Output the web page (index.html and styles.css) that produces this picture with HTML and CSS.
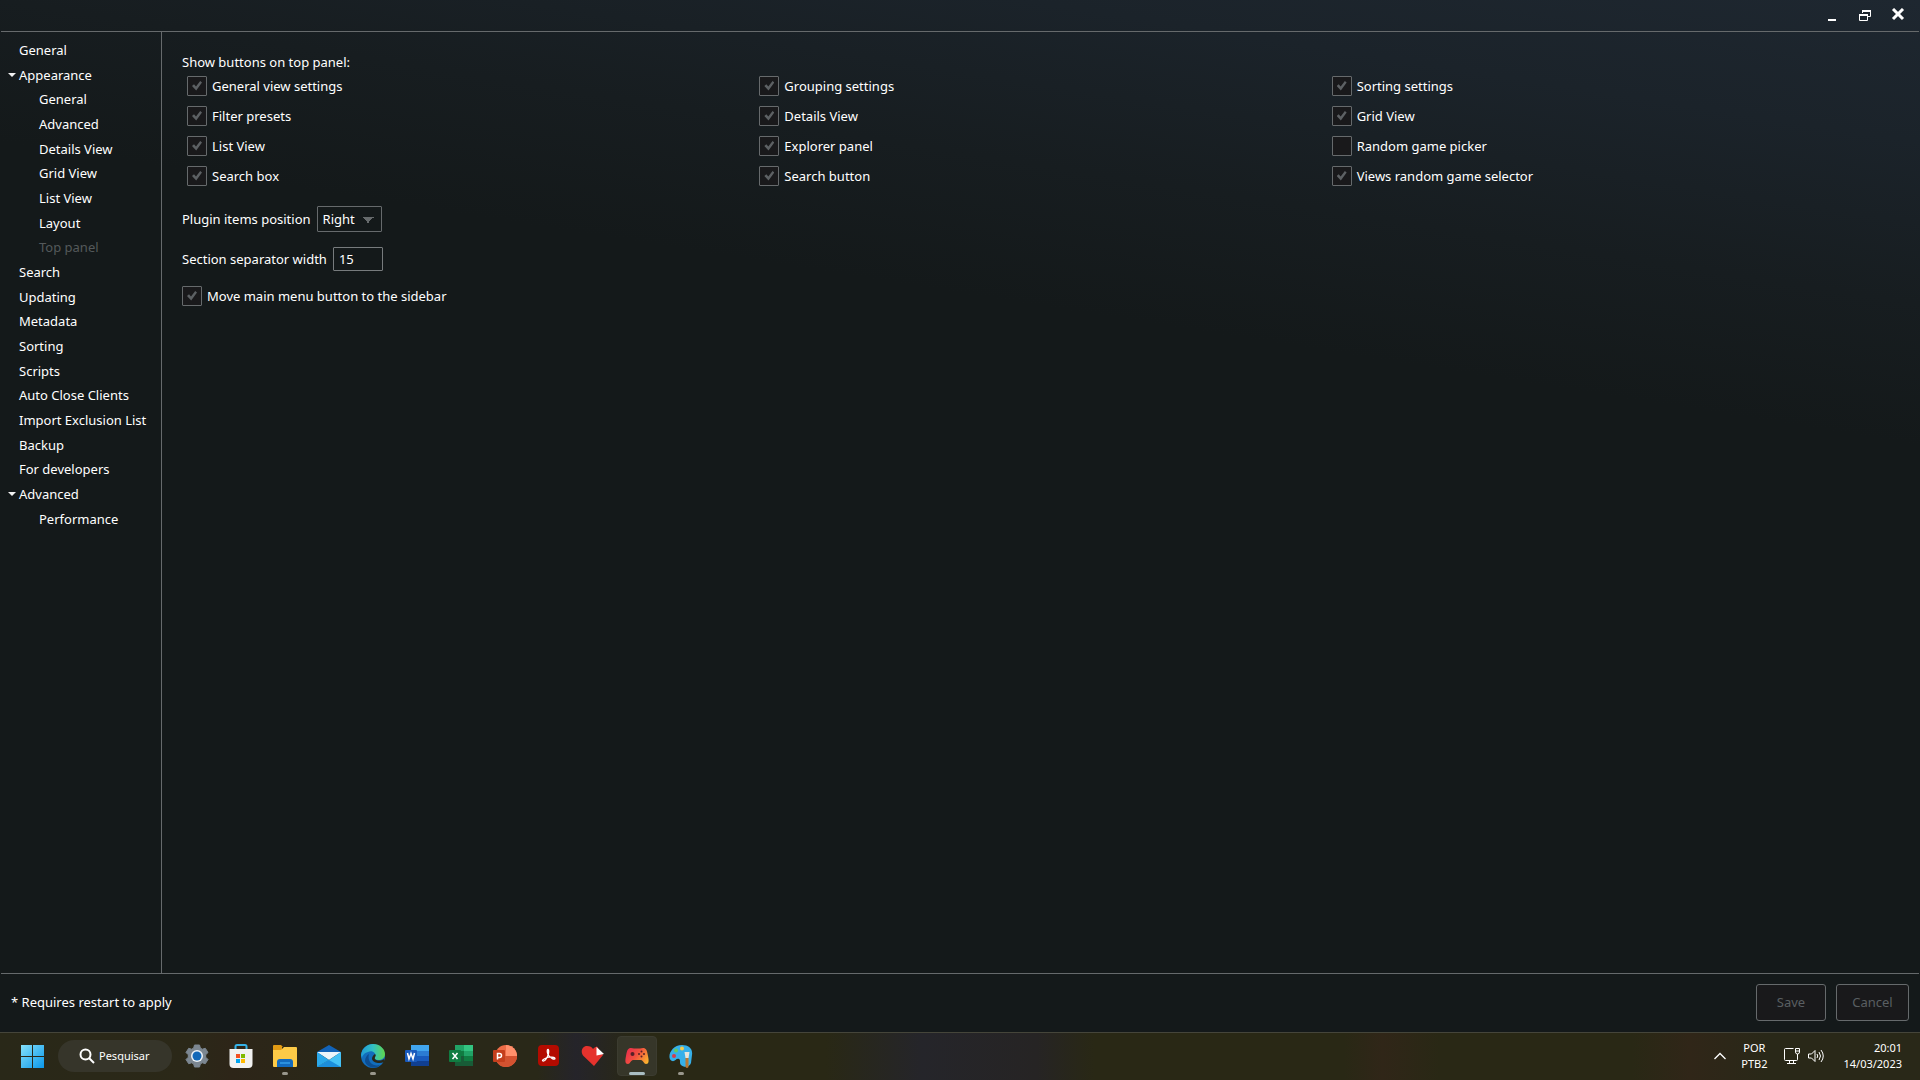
FILE: index.html
```html
<!DOCTYPE html>
<html lang="en">
<head>
<meta charset="utf-8">
<title>Settings</title>
<link rel="stylesheet" href="styles.css">
</head>
<body>
<div class="window">
  <header class="titlebar">
    <button class="win-btn" aria-label="Minimize"><svg width="14" height="14" viewBox="0 0 14 14"><path d="M3 12h8" stroke="#fff" stroke-width="2"/></svg></button>
    <button class="win-btn" aria-label="Restore"><svg width="14" height="14" viewBox="0 0 14 14" fill="none" stroke="#fff"><path d="M4.500 5V2.500h8v6H10" /><path d="M4 3h9M1 7h9" stroke-width="2"/><path d="M1.500 7v5.500h8V7"/></svg></button>
    <button class="win-btn" aria-label="Close"><svg width="14" height="14" viewBox="0 0 14 14"><path d="M2 1l10 10M12 1L2 11" stroke="#fff" stroke-width="3"/></svg></button>
  </header>
  <div class="body">
    <nav class="sidebar" aria-label="Settings sections">
      <ul class="tree">
        <li><a href="#">General</a></li>
        <li class="group"><a href="#">Appearance</a></li>
        <li class="child"><a href="#">General</a></li>
        <li class="child"><a href="#">Advanced</a></li>
        <li class="child"><a href="#">Details View</a></li>
        <li class="child"><a href="#">Grid View</a></li>
        <li class="child"><a href="#">List View</a></li>
        <li class="child"><a href="#">Layout</a></li>
        <li class="child current"><a href="#" aria-current="page">Top panel</a></li>
        <li><a href="#">Search</a></li>
        <li><a href="#">Updating</a></li>
        <li><a href="#">Metadata</a></li>
        <li><a href="#">Sorting</a></li>
        <li><a href="#">Scripts</a></li>
        <li><a href="#">Auto Close Clients</a></li>
        <li><a href="#">Import Exclusion List</a></li>
        <li><a href="#">Backup</a></li>
        <li><a href="#">For developers</a></li>
        <li class="group"><a href="#">Advanced</a></li>
        <li class="child"><a href="#">Performance</a></li>
      </ul>
    </nav>
    <main class="content">
      <p class="heading">Show buttons on top panel:</p>
      <div class="options">
        <label class="check"><input type="checkbox" checked>General view settings</label>
        <label class="check"><input type="checkbox" checked>Grouping settings</label>
        <label class="check"><input type="checkbox" checked>Sorting settings</label>
        <label class="check"><input type="checkbox" checked>Filter presets</label>
        <label class="check"><input type="checkbox" checked>Details View</label>
        <label class="check"><input type="checkbox" checked>Grid View</label>
        <label class="check"><input type="checkbox" checked>List View</label>
        <label class="check"><input type="checkbox" checked>Explorer panel</label>
        <label class="check"><input type="checkbox">Random game picker</label>
        <label class="check"><input type="checkbox" checked>Search box</label>
        <label class="check"><input type="checkbox" checked>Search button</label>
        <label class="check"><input type="checkbox" checked>Views random game selector</label>
      </div>
      <div class="field">
        <label for="position">Plugin items position</label>
        <select id="position"><option>Right</option><option>Left</option></select>
      </div>
      <div class="field">
        <label for="separator">Section separator width</label>
        <input class="number" id="separator" type="text" value="15">
      </div>
      <label class="check"><input type="checkbox" checked>Move main menu button to the sidebar</label>
    </main>
  </div>
  <footer class="footer">
    <span class="note">* Requires restart to apply</span>
    <button class="btn save">Save</button>
    <button class="btn">Cancel</button>
  </footer>
</div>
<div class="taskbar">
  <div class="apps">
    <button class="app" aria-label="Start"><svg width="24" height="24" viewBox="0 0 24 24"><defs><linearGradient id="win" x1="0" y1="0" x2="24" y2="24" gradientUnits="userSpaceOnUse"><stop stop-color="#8ae4fb"/><stop offset="1" stop-color="#0a97ea"/></linearGradient></defs><path fill="url(#win)" d="M1 1h11v11H1zM13 1h11v11H13zM1 13h11v11H1zM13 13h11v11H13z"/></svg></button>
    <button class="search"><svg width="16" height="16" viewBox="0 0 16 16" fill="none" stroke="#fff" stroke-width="2"><circle cx="6.500" cy="6.500" r="5"/><path d="M10 10l5 5"/></svg>Pesquisar</button>
    <button class="app" aria-label="Configurações"><svg width="24" height="24" viewBox="0 0 24 24"><path fill="#7c8791" stroke="#7c8791" stroke-width="1" stroke-linejoin="round" d="M9.500 1h5l.8 3 2 1.200 3-.9L23 8.500l-2.300 2.300v2.400L23 15.500l-2.700 4.200-3-.9-2 1.200-.8 3h-5l-.8-3-2-1.200-3 .9L1 15.500l2.300-2.300v-2.400L1 8.500l2.700-4.200 3 .9 2-1.200z"/><circle cx="12" cy="12" r="6" fill="#eef3f7"/><circle cx="12" cy="12" r="4.500" fill="#1268b8"/></svg></button>
    <button class="app" aria-label="Microsoft Store"><svg width="24" height="24" viewBox="0 0 24 24"><path d="M6.500 6V2.500Q6.500 1 8 1h8q1.500 0 1.500 1.500V6" fill="none" stroke="#35b2e8" stroke-width="2"/><path fill="#f1f1f0" d="M.5 5h23v15q0 4-4 4h-15q-4 0-4-4z"/><path fill="#f25022" d="M7 10h4v4H7z"/><path fill="#7fba00" d="M12 10h4v4h-4z"/><path fill="#00a4ef" d="M7 15h4v4H7z"/><path fill="#ffb900" d="M12 15h4v4h-4z"/></svg></button>
    <button class="app open" aria-label="Explorador de Arquivos"><svg width="24" height="24" viewBox="0 0 24 24"><path fill="#e29b14" d="M0 2q0-1 1-1h7l2 2h-1v4H0z"/><path fill="#fcca47" d="M0 6h8l3-3h12q1 0 1 1v18q0 1-1 1H1q-1 0-1-1z"/><path fill="#126bc0" d="M4 23v-5q0-3 3-3h10q3 0 3 3v5z"/><path fill="#2b91df" d="M7 18h10v2H7z"/></svg></button>
    <button class="app" aria-label="E-mail"><svg width="24" height="24" viewBox="0 0 24 24"><path fill="#1263b7" d="M0 8l12-7 12 7v3H0z"/><path fill="#ecf5fb" d="M0 8h24L12 16z"/><path fill="#2aa8ea" d="M0 8l12 8L0 23z"/><path fill="#45c2f5" d="M24 8v15H0l12-7z"/><path fill="#1c8edb" d="M0 23l12-7 12 7z"/></svg></button>
    <button class="app open" aria-label="Microsoft Edge"><svg width="24" height="24" viewBox="0 0 24 24"><defs><linearGradient id="edge" x1="0" y1="8" x2="24" y2="8" gradientUnits="userSpaceOnUse"><stop stop-color="#209bd8"/><stop offset=".5" stop-color="#32bfc3"/><stop offset="1" stop-color="#60d74b"/></linearGradient></defs><circle cx="12" cy="12" r="12" fill="#126dbd"/><path fill="url(#edge)" d="M0 11C1 4 6 0 12 0c7 0 12 5 12 10 0 4-3 6-7 6-3 0-4-1-3-3 2-4-3-7-7-5-4 1-6 4-6 6z"/><path fill="#0d4d91" d="M8 10c-2 7 3 13 11 11-5 5-14 2-15-4 0-3 2-6 4-7z"/><path fill="#29281a" d="M14 10c2 2-1 3 0 5 2 2 6 2 9 0v3c-4 2-11 1-12-3 0-2 1-4 3-5z"/></svg></button>
    <button class="app" aria-label="Word"><svg width="24" height="24" viewBox="0 0 24 24"><path fill="#41a5ee" d="M6 1h18v6H6z"/><path fill="#2b7cd3" d="M6 7h18v5H6z"/><path fill="#185abd" d="M6 12h18v5H6z"/><path fill="#103f91" d="M6 17h18v5H6z"/><rect y="6" width="12" height="12" rx="1" fill="#185abd"/><path d="M2.500 9l1.500 6 2-5.500L8 15l1.500-6" fill="none" stroke="#fff" stroke-width="1.500"/></svg></button>
    <button class="app" aria-label="Excel"><svg width="24" height="24" viewBox="0 0 24 24"><path fill="#21a366" d="M6 1h9v6H6z"/><path fill="#33c481" d="M15 1h9v6h-9z"/><path fill="#107c41" d="M6 7h9v5H6z"/><path fill="#21a366" d="M15 7h9v5h-9z"/><path fill="#185c37" d="M6 12h9v10H6z"/><path fill="#107c41" d="M15 12h9v5h-9z"/><path fill="#185c37" d="M15 17h9v5h-9z"/><rect y="6" width="12" height="12" rx="1" fill="#107c41"/><path d="M3.500 9l5 6M8.500 9l-5 6" stroke="#fff" stroke-width="1.500"/></svg></button>
    <button class="app" aria-label="PowerPoint"><svg width="24" height="24" viewBox="0 0 24 24"><circle cx="13" cy="12" r="11" fill="#ed6c47"/><path fill="#ff8f6b" d="M13 1a11 11 0 0 1 11 11H13z"/><path fill="#d35230" d="M2 12h22a11 11 0 0 1-22 0z"/><rect y="6" width="12" height="12" rx="1" fill="#c43e1c"/><path d="M4.500 15.500V9.500h2q2 0 2 2t-2 2h-2" fill="none" stroke="#fff" stroke-width="1.500"/></svg></button>
    <button class="app" aria-label="Acrobat"><svg width="24" height="24" viewBox="0 0 24 24"><rect x="1" y="1" width="21" height="21" rx="4" fill="#b30b00"/><path d="M6 17c-2-1 3-3 6-4 3 0 6 0 6 1.500s-5 0-7-4c-1-3-1-5 0-5s1 4-.5 7-3 5-4.500 4.500z" fill="none" stroke="#fff" stroke-width="1.300"/></svg></button>
    <button class="app" aria-label="Paciência"><svg width="24" height="24" viewBox="0 0 24 24"><path fill="#e5322d" d="M13 22L2.500 12C-1 8 1 2 6 2c3 0 5 1 6 3 1-1 2-2 4-2.500L22 11z"/><path fill="#fff" d="M15.500 3l7.500 7-7.500 1.500z"/></svg></button>
    <button class="app active" aria-label="Playnite"><svg width="24" height="24" viewBox="0 0 24 24"><defs><linearGradient id="pad" x1="0" y1="4" x2="22" y2="20" gradientUnits="userSpaceOnUse"><stop stop-color="#e8264f"/><stop offset=".5" stop-color="#f1513f"/><stop offset="1" stop-color="#fcb82e"/></linearGradient></defs><path fill="url(#pad)" d="M6 4q6 1 12 0c3 0 4 2 5 8 1 5 1 8-2 8-2 0-3-4-5-4H8c-2 0-3 4-5 4-3 0-3-3-2-8 1-6 2-8 5-8z"/><circle cx="7.500" cy="10" r="2" fill="#572127"/><g fill="#572127"><circle cx="16.500" cy="7.500" r="1"/><circle cx="16.500" cy="12.500" r="1"/><circle cx="14" cy="10" r="1"/><circle cx="19" cy="10" r="1"/></g></svg></button>
    <button class="app open" aria-label="Paint"><svg width="24" height="24" viewBox="0 0 24 24"><path fill="#36b0e9" d="M13 1c7 0 11 4 10 10l-1 8c-1 4-7 5-10 2-2-2 0-5-2-6-3-1-4 3-7 2-6-3-1-16 10-16z"/><circle cx="5" cy="12" r="2" fill="#d53c4c"/><circle cx="7" cy="6.500" r="2" fill="#66cb60"/><circle cx="13" cy="4.500" r="2" fill="#f4cc4c"/><path fill="#e8e4da" d="M15.500 8h5l-1 6h-3z"/><path fill="#b97832" d="M16.500 14h3v9q-1.500 2-3 0z"/></svg></button>
  </div>
  <div class="tray">
    <svg class="chevron" width="14" height="14" viewBox="0 0 14 14"><path d="M1.500 10L7 4.500l5.500 5.500" fill="none" stroke="#fff" stroke-width="1.300"/></svg>
    <div class="lang"><span>POR</span><span>PTB2</span></div>
    <svg width="18" height="18" viewBox="0 0 18 18" fill="none" stroke="#fff"><path d="M10.500 1.500h-8q-1 0-1 1v10q0 1 1 1h11q1 0 1-1V8M6.500 14v3M10.500 14v3M4 16.500h9"/><path d="M12.500 1.500h4V5q0 2-2 2t-2-2zM12.500 4h4M14.500 7v3"/></svg>
    <svg class="sound" width="18" height="18" viewBox="0 0 18 18" fill="none" stroke="#fff"><path d="M1.500 7v4h3L8 14.500v-11L4.500 7z"/><path d="M10 7q1.500 2 0 4M12 5q3 4 0 8M14 3q4.500 6 0 12"/></svg>
    <div class="clock"><span>20:01</span><span>14/03/2023</span></div>
  </div>
</div>
</body>
</html>
```
FILE: styles.css
```css
* {
  box-sizing: border-box;
}

body {
  margin: 0;
  min-height: 100vh;
  display: flex;
  flex-direction: column;
  background: #14191a;
  color: #fff;
  font: 13px/20px "Noto Sans", "Open Sans", sans-serif;
}

button,
input,
select {
  font: inherit;
  color: inherit;
}

button {
  padding: 0;
  border: 0;
  background: none;
}

svg {
  display: block;
}

.window {
  flex: 1;
  display: flex;
  flex-direction: column;
  padding: 0 1px;
  background: linear-gradient(189deg, #1e2730 0, #1b232a 140px, #171d20 300px, #14191a 440px);
}

/* Title bar */
.titlebar {
  height: 32px;
  display: flex;
  justify-content: flex-end;
  gap: 19px;
  padding: 8px 14px 0 0;
  border-bottom: 1px solid #666a6c;
}

.win-btn {
  width: 14px;
  height: 14px;
}

/* Section tree */
.body {
  flex: 1;
  display: flex;
}

.sidebar {
  width: 161px;
  flex: none;
  border-right: 1px solid #666a6c;
}

.tree {
  list-style: none;
  margin: 0;
  padding: 6px 0 0 18px;
}

.tree li {
  line-height: 25px;
  white-space: nowrap;
}

.tree li:nth-child(3n + 2) {
  line-height: 24px;
}

.tree a {
  color: inherit;
  text-decoration: none;
}

.tree .child {
  padding-left: 20px;
}

.tree .current {
  color: #54595b;
}

.tree .group::before {
  content: "";
  float: left;
  margin: 10px 0 0 -11px;
  border: 4px solid transparent;
  border-top-color: #f2f2f2;
  border-bottom: 0;
}

/* Options */
.content {
  flex: 1;
  padding: 20px 19px 0 20px;
}

.heading {
  margin: 0;
}

.options {
  display: grid;
  grid-template-columns: repeat(3, 1fr);
  row-gap: 10px;
  padding: 4px 0 20px 5px;
  margin-right: -4px;
}

.check {
  display: flex;
  align-items: center;
  gap: 5px;
}

.check input {
  appearance: none;
  display: grid;
  place-items: center;
  width: 20px;
  height: 20px;
  margin: 0;
  border: 1px solid #666a6c;
  border-radius: 1px;
  background: #19191b;
}

.check input:checked::before {
  content: "";
  width: 10px;
  height: 10px;
  background: #5c6063;
  clip-path: polygon(0 50%, 20% 32%, 40% 55%, 82% 0, 100% 15%, 42% 94%);
}

.field {
  display: flex;
  align-items: center;
  gap: 6px;
  margin-bottom: 15px;
}

select {
  appearance: none;
  width: 65px;
  height: 26px;
  padding: 0 0 0 5px;
  border: 1px solid #666a6c;
  border-radius: 1px;
  background: conic-gradient(from -45deg at 50% 100%, #666a6c 90deg, transparent 0) 44px 10px / 12px 6px no-repeat;
  background: conic-gradient(from -45deg at 50% 100%, #666a6c 90deg, transparent 0) 44px 10px / 12px 6px no-repeat;
}

.number {
  width: 50px;
  height: 24px;
  padding: 0 5px;
  border: 1px solid #777b7d;
  border-radius: 1px;
  background: transparent;
}

/* Footer */
.footer {
  display: flex;
  align-items: center;
  gap: 10px;
  height: 59px;
  padding: 0 10px 2px;
  border-top: 1px solid #666a6c;
}

.note {
  flex: 1;
}

.btn {
  width: 73px;
  height: 37px;
  border: 1px solid #666a6c;
  border-radius: 3px;
  background: #19191b;
  color: #5a5f62;
}

.save {
  width: 70px;
}

/* Taskbar */
.taskbar {
  display: flex;
  justify-content: space-between;
  height: 48px;
  padding: 0 18px 1px 12px;
  border-top: 1px solid #45453a;
  background: linear-gradient(90deg, #292818 0, #2b2818 10%, #2d2518 12%, #292818 18%, #292818 28%, #25242a 30%, #292815 33%, #292815 43%, #25252a 48%, #262424 54%, #292815 57%, #292815 70%, #302618 72%, #292815 75%, #292815 85%, #302618 88%, #292818 92%);
  font-size: 11px;
  line-height: 16px;
}

.apps {
  display: flex;
  align-items: center;
  gap: 4px;
}

.app {
  position: relative;
  width: 40px;
  height: 40px;
  display: grid;
  place-items: center;
  border-radius: 4px;
}

.app.open::after,
.app.active::after {
  content: "";
  position: absolute;
  bottom: 1px;
  left: 17px;
  width: 6px;
  height: 3px;
  border-radius: 2px;
  background: #99978c;
}

.app.active {
  border: 1px solid #3c3c30;
  background: #363629;
}

.app.active::after {
  left: 11px;
  bottom: 0;
  width: 16px;
  background: #a9bdc2;
}

.search {
  display: flex;
  align-items: center;
  gap: 4px;
  width: 114px;
  height: 32px;
  margin: 0 1px 0 2px;
  padding-left: 21px;
  border-radius: 16px;
  background: #36352a;
}

.tray {
  display: flex;
  align-items: center;
}

.chevron {
  margin-right: 14px;
}

.lang,
.clock {
  display: flex;
  flex-direction: column;
}

.lang {
  align-items: center;
  margin-right: 16px;
}

.sound {
  margin: 0 18px 0 6px;
}

.clock {
  align-items: flex-end;
}
```
